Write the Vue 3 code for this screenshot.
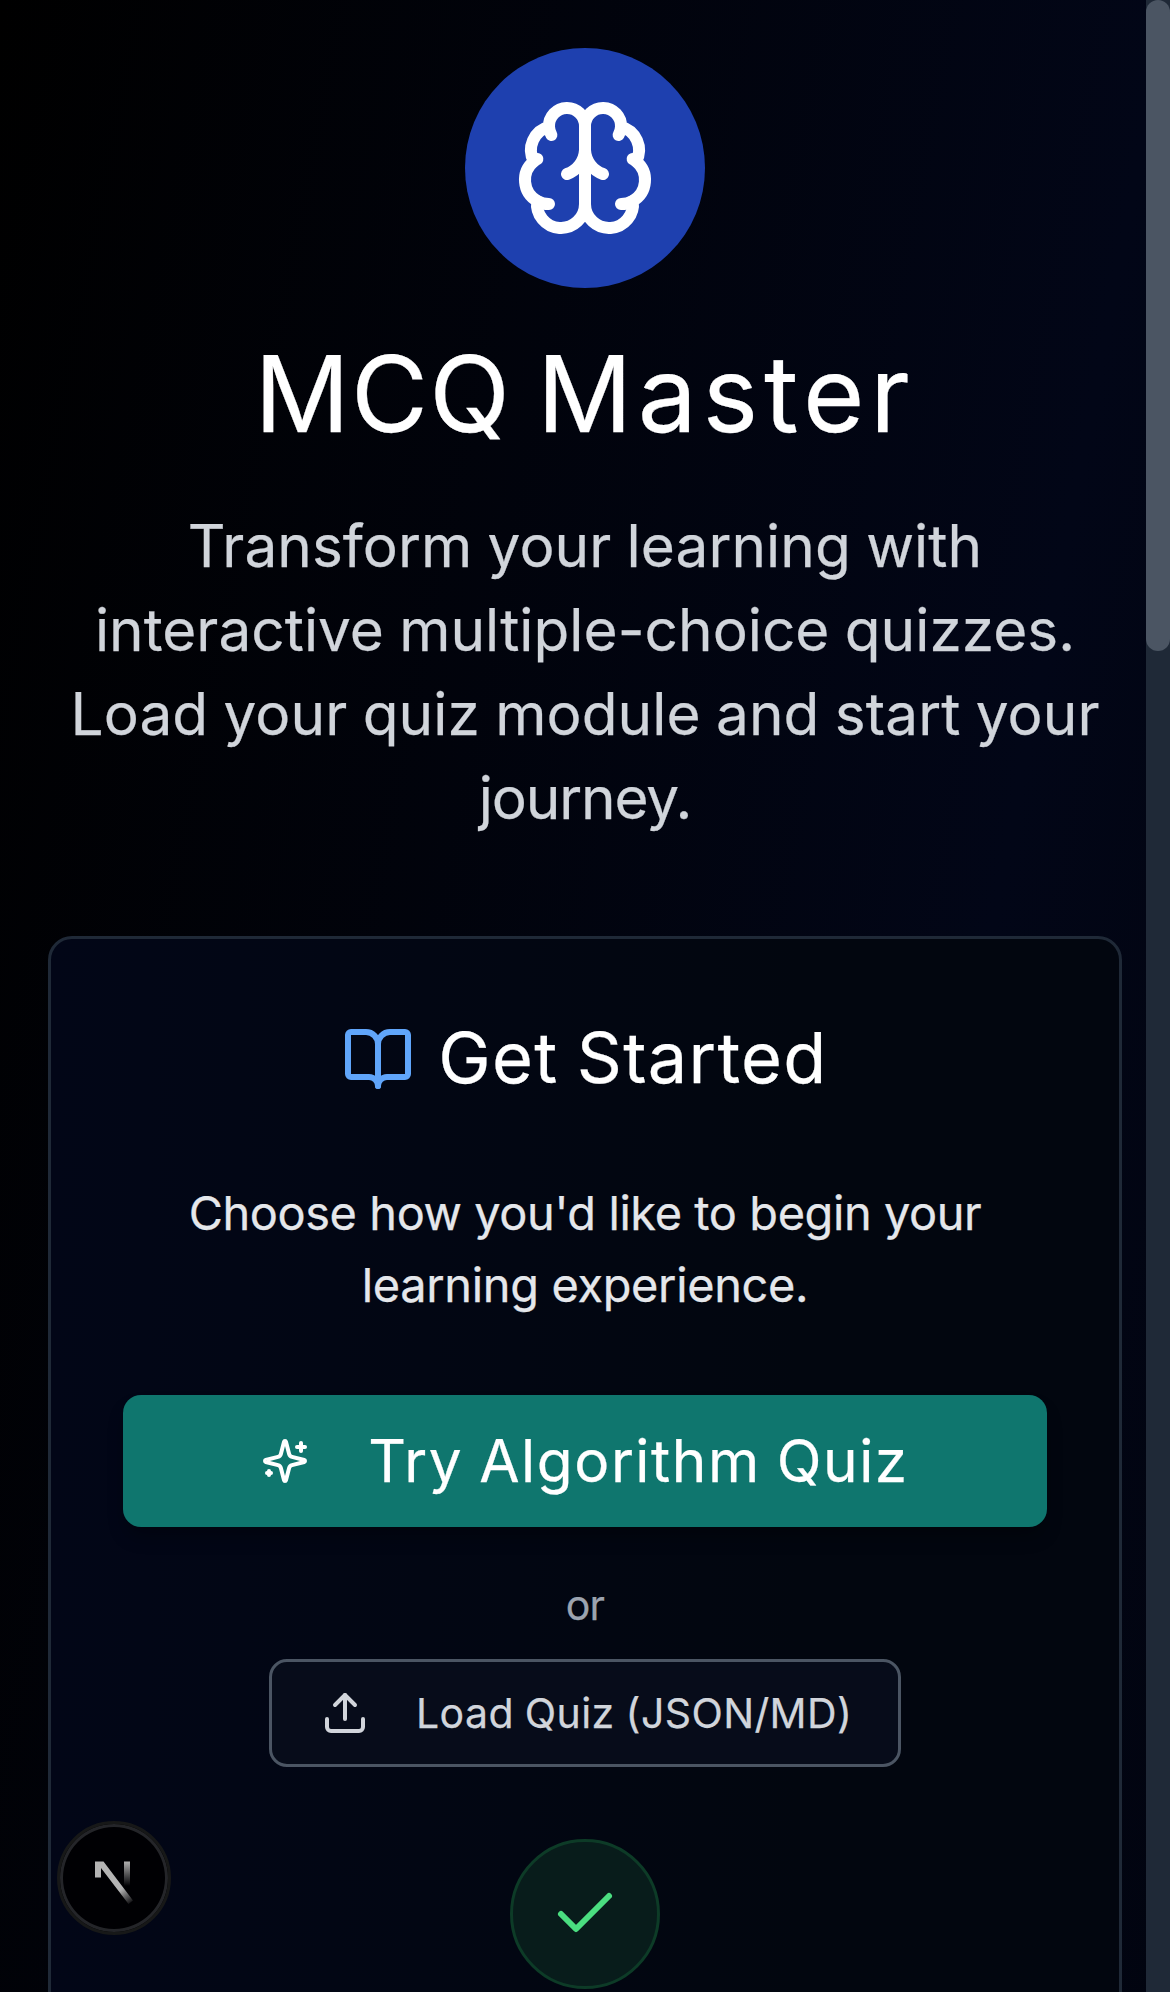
<script setup>
const intro = [
  { text: 'Transform your learning with', spacing: '0.06px' },
  { text: 'interactive multiple-choice quizzes.', spacing: '0.02px' },
  { text: 'Load your quiz module and start your', spacing: '0.08px' },
  { text: 'journey.', spacing: '-1.1px' }
]
const prompt = [
  { text: "Choose how you'd like to begin your", spacing: '-0.4px' },
  { text: 'learning experience.', spacing: '-0.32px' }
]
</script>

<template>
  <div class="page">
    <header class="hero">
      <div class="logo">
        <svg class="icon brain" viewBox="0 0 24 24">
          <path d="M12 5a3 3 0 1 0-5.997.125 4 4 0 0 0-2.526 5.77 4 4 0 0 0 .556 6.588A4 4 0 1 0 12 18Z" />
          <path d="M12 5a3 3 0 1 1 5.997.125 4 4 0 0 1 2.526 5.77 4 4 0 0 1-.556 6.588A4 4 0 1 1 12 18Z" />
          <path d="M15 13a4.5 4.5 0 0 1-3-4 4.5 4.5 0 0 1-3 4" />
          <path d="M17.599 6.5a3 3 0 0 0 .399-1.375" />
          <path d="M6.003 5.125A3 3 0 0 0 6.401 6.5" />
          <path d="M3.477 10.896a4 4 0 0 1 .585-.396" />
          <path d="M19.938 10.5a4 4 0 0 1 .585.396" />
          <path d="M6 18a4 4 0 0 1-1.967-.516" />
          <path d="M19.967 17.484A4 4 0 0 1 18 18" />
        </svg>
      </div>
      <h1><span class="caps">MCQ</span> <span class="word">Master</span></h1>
      <p class="intro">
        <span v-for="line in intro" :key="line.text" class="line" :style="{ letterSpacing: line.spacing }">{{ line.text }}</span>
      </p>
    </header>

    <section class="card">
      <h2>
        <svg class="icon book" viewBox="0 0 24 24">
          <path d="M12 7v14" />
          <path d="M3 18a1 1 0 0 1-1-1V4a1 1 0 0 1 1-1h5a4 4 0 0 1 4 4 4 4 0 0 1 4-4h5a1 1 0 0 1 1 1v13a1 1 0 0 1-1 1h-6a3 3 0 0 0-3 3 3 3 0 0 0-3-3z" />
        </svg>
        <span>Get Started</span>
      </h2>
      <p class="prompt">
        <span v-for="line in prompt" :key="line.text" class="line" :style="{ letterSpacing: line.spacing }">{{ line.text }}</span>
      </p>
      <button class="try">
        <svg class="icon small" viewBox="0 0 24 24">
          <path d="M9.937 15.5A2 2 0 0 0 8.5 14.063l-6.135-1.582a.5.5 0 0 1 0-.962L8.5 9.936A2 2 0 0 0 9.937 8.5l1.582-6.135a.5.5 0 0 1 .963 0L14.063 8.5A2 2 0 0 0 15.5 9.937l6.135 1.581a.5.5 0 0 1 0 .964L15.5 14.063a2 2 0 0 0-1.437 1.437l-1.582 6.135a.5.5 0 0 1-.963 0z" />
          <path d="M20 3v4" />
          <path d="M22 5h-4" />
          <path d="M4 17v2" />
          <path d="M5 18H3" />
        </svg>
        <span>Try Algorithm Quiz</span>
      </button>
      <p class="or">or</p>
      <button class="load">
        <svg class="icon small" viewBox="0 0 24 24">
          <path d="M21 15v4a2 2 0 0 1-2 2H5a2 2 0 0 1-2-2v-4" />
          <path d="m17 8-5-5-5 5" />
          <path d="M12 3v12" />
        </svg>
        <span>Load Quiz (JSON/MD)</span>
      </button>
      <div class="done">
        <svg class="icon check" viewBox="0 0 24 24"><path d="M20 6 9 17l-5-5" /></svg>
      </div>
    </section>

    <div class="badge">
      <svg viewBox="0 0 102 102" width="102" height="102">
        <defs>
          <linearGradient id="diagonal" gradientUnits="userSpaceOnUse" x1="57" y1="63" x2="68" y2="78">
            <stop offset="0" stop-color="#b4b4b4" />
            <stop offset="1" stop-color="#b4b4b4" stop-opacity="0" />
          </linearGradient>
          <linearGradient id="stem" gradientUnits="userSpaceOnUse" x1="64" y1="34" x2="64" y2="59">
            <stop offset="0" stop-color="#b4b4b4" />
            <stop offset="1" stop-color="#b4b4b4" stop-opacity="0" />
          </linearGradient>
        </defs>
        <path fill="url(#diagonal)" d="M32 34.500h8.500L70 73.500L65.500 77L38 41V50.500h-6z" />
        <path fill="url(#stem)" d="M61 34.500h6v25h-6z" />
      </svg>
    </div>
    <div class="scrollbar"><div class="thumb"></div></div>
  </div>
</template>

<style>
body {
  background: #000;
}
</style>

<style scoped>
.page {
  position: relative;
  box-sizing: border-box;
  width: 1170px;
  height: 1992px;
  padding: 48px;
  overflow: hidden;
  font-family: 'Inter', 'Liberation Sans', sans-serif;
  -webkit-text-stroke: 0.25px currentColor;
  background: linear-gradient(to bottom right, #000, #020617 50%, #000) 0 0 / 1170px 6104px no-repeat;
}
.hero {
  display: flex;
  flex-direction: column;
  align-items: center;
  text-align: center;
}
.icon {
  display: block;
  flex: none;
  fill: none;
  stroke: currentColor;
  stroke-width: 2;
  stroke-linecap: round;
  stroke-linejoin: round;
}
.logo {
  display: flex;
  align-items: center;
  justify-content: center;
  width: 240px;
  height: 240px;
  border-radius: 50%;
  background: #1e40af;
  color: #fff;
}
.brain {
  width: 144px;
  height: 144px;
}
h1 {
  margin: 46px 0 0;
  font-size: 105.5px;
  font-weight: 400;
  line-height: 120px;
  word-spacing: -4px;
  color: #fff;
}
.caps {
  letter-spacing: 1.2px;
}
.word {
  letter-spacing: 5.6px;
}
.line {
  display: block;
  white-space: nowrap;
}
.intro {
  margin: 50px 0 0;
  font-size: 58.5px;
  line-height: 84px;
  word-spacing: -1.2px;
  color: #d1d5db;
}
.card {
  display: flex;
  flex-direction: column;
  align-items: center;
  box-sizing: border-box;
  height: 1500px;
  margin-top: 96px;
  padding: 84px 72px 72px;
  border: 3px solid #1f2937;
  border-radius: 24px;
  background: linear-gradient(to right, #020617, #02060f 70%, #02060f);
}
h2 {
  display: flex;
  align-items: flex-start;
  gap: 24px;
  height: 72px;
  margin: 0;
  font-size: 70.3px;
  font-weight: 400;
  line-height: 69px;
  letter-spacing: 1.3px;
  word-spacing: -3px;
  color: #fff;
}
.book {
  width: 72px;
  height: 72px;
  color: #60a5fa;
}
.prompt {
  margin: 82px 0 0;
  font-size: 46.9px;
  line-height: 72px;
  text-align: center;
  color: #e5e7eb;
}
button {
  display: flex;
  align-items: center;
  box-sizing: border-box;
  margin: 0;
  border: 0;
  border-radius: 18px;
  font-family: inherit;
  white-space: nowrap;
}
.small {
  width: 48px;
  height: 48px;
}
.try {
  justify-content: center;
  gap: 59px;
  width: 924px;
  height: 132px;
  margin-top: 74px;
  padding: 0;
  background: #0f766e;
  box-shadow: 0 12px 18px -3px rgba(0, 0, 0, 0.3);
  font-size: 58.5px;
  line-height: 84px;
  letter-spacing: 1.55px;
  word-spacing: -2px;
  color: #fff;
}
.or {
  margin: 48px 0 24px;
  font-size: 41px;
  line-height: 60px;
  letter-spacing: -0.8px;
  color: #9ca3af;
}
.load {
  gap: 47px;
  width: 632px;
  height: 108px;
  padding: 0 0 0 49px;
  border: 3px solid #4b5563;
  background: #070c1a;
  font-size: 41px;
  line-height: 60px;
  letter-spacing: 0.4px;
  word-spacing: -1px;
  color: #d1d5db;
}
.done {
  display: flex;
  align-items: center;
  justify-content: center;
  box-sizing: border-box;
  flex: none;
  width: 150px;
  height: 150px;
  margin-top: 72px;
  border: 3px solid #0d3b27;
  border-radius: 50%;
  background: #081c1b;
  color: #4ade80;
}
.check {
  width: 72px;
  height: 72px;
}
.badge {
  position: absolute;
  left: 57px;
  top: 1821px;
  box-sizing: border-box;
  width: 114px;
  height: 114px;
  padding: 3px;
  border: 3px solid #171818;
  border-radius: 50%;
  background: #000003;
  box-shadow: inset 0 0 0 3px #242529;
}
.badge svg {
  display: block;
}
.scrollbar {
  position: absolute;
  top: 0;
  right: 0;
  width: 24px;
  height: 1992px;
  background: #1f2937;
}
.thumb {
  height: 651px;
  border-radius: 12px;
  background: #4b5563;
}
</style>
